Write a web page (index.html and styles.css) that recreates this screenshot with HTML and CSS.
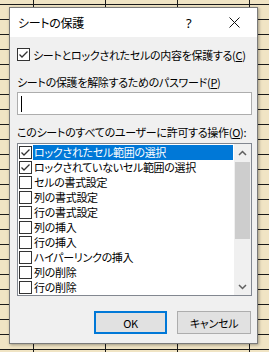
FILE: index.html
```html
<!DOCTYPE html>
<html lang="ja">
<head>
    <meta charset="UTF-8">
    <title>シートの保護</title>
    <link rel="stylesheet" href="styles.css">
</head>
<body>
    <div class="dialog">
        <div class="titlebar">
            <span class="title">シートの保護</span>
            <span class="help">?</span>
            <span class="close">
                <svg width="11" height="11" viewBox="0 0 11 11"><path d="M0.5 0.5L10.5 10.5M10.5 0.5L0.5 10.5" stroke="#111" stroke-width="1" fill="none"/></svg>
            </span>
        </div>

        <div class="content">
            <div class="check-row">
                <span class="box"><svg width="11" height="11" viewBox="0 0 11 11"><path d="M1.5 5.5L4 8L9.5 2.5" stroke="#333" stroke-width="1.3" fill="none"/></svg></span>
                <span>シートとロックされたセルの内容を保護する(<u>C</u>)</span>
            </div>

            <div class="label pw-label">シートの保護を解除するためのパスワード(<u>P</u>)</div>
            <div class="input"><span class="caret"></span></div>

            <div class="label ops-label">このシートのすべてのユーザーに許可する操作(<u>O</u>):</div>
            <div class="list">
                <ul class="items">
                    <li class="selected">
                        <span class="box"><svg width="11" height="11" viewBox="0 0 11 11"><path d="M1.5 5.5L4 8L9.5 2.5" stroke="#333" stroke-width="1.3" fill="none"/></svg></span>
                        <span class="text">ロックされたセル範囲の選択</span>
                    </li>
                    <li>
                        <span class="box"><svg width="11" height="11" viewBox="0 0 11 11"><path d="M1.5 5.5L4 8L9.5 2.5" stroke="#333" stroke-width="1.3" fill="none"/></svg></span>
                        <span class="text">ロックされていないセル範囲の選択</span>
                    </li>
                    <li><span class="box"></span><span class="text">セルの書式設定</span></li>
                    <li><span class="box"></span><span class="text">列の書式設定</span></li>
                    <li><span class="box"></span><span class="text">行の書式設定</span></li>
                    <li><span class="box"></span><span class="text">列の挿入</span></li>
                    <li><span class="box"></span><span class="text">行の挿入</span></li>
                    <li><span class="box"></span><span class="text">ハイパーリンクの挿入</span></li>
                    <li><span class="box"></span><span class="text">列の削除</span></li>
                    <li><span class="box"></span><span class="text">行の削除</span></li>
                </ul>
                <div class="scrollbar">
                    <div class="arrow">
                        <svg width="9" height="6" viewBox="0 0 9 6"><path d="M1 5L4.5 1.5L8 5" stroke="#606060" stroke-width="1.5" fill="none"/></svg>
                    </div>
                    <div class="track"><div class="thumb"></div></div>
                    <div class="arrow">
                        <svg width="9" height="6" viewBox="0 0 9 6"><path d="M1 1L4.5 4.5L8 1" stroke="#606060" stroke-width="1.5" fill="none"/></svg>
                    </div>
                </div>
            </div>

            <div class="buttons">
                <button class="btn default">OK</button>
                <button class="btn">キャンセル</button>
            </div>
        </div>
    </div>
</body>
</html>
```

FILE: styles.css
```css
:root {
    --grid-bg: #f0e4c4;
    --grid-line: #1a1a1a;
    --face: #f0f0f0;
    --select: #0078d7;
}

* {
    margin: 0;
    padding: 0;
    box-sizing: border-box;
}

body {
    width: 269px;
    height: 352px;
    overflow: hidden;
    font-family: "Noto Sans CJK JP", "Noto Sans", sans-serif;
    font-size: 11px;
    letter-spacing: -0.3px;
    font-feature-settings: "palt";
    color: #000;
    background-color: var(--grid-bg);
    background-image:
        linear-gradient(to right, var(--grid-line) 1px, transparent 1px),
        linear-gradient(to bottom, var(--grid-line) 1px, transparent 1px);
    background-size: 72px 100%, 100% 15px;
    background-position: 33px 0, 0 4px;
    padding: 7px 0 0 9px;
}

.dialog {
    width: 249px;
    height: 337px;
    border: 1px solid #7a7a7a;
    background: var(--face);
    box-shadow: 1px 1px 3px rgba(0, 0, 0, 0.35);
}

.titlebar {
    height: 29px;
    background: white;
    display: flex;
    align-items: center;
    padding-left: 8px;
}

.title {
    flex: 1;
    font-size: 12px;
}

.help {
    font-family: "Noto Sans", sans-serif;
    font-size: 13px;
    width: 8px;
    margin-right: 35px;
}

.close {
    display: flex;
    margin-right: 17px;
}

.content {
    padding: 11px 5px 0 7px;
}

.check-row {
    display: flex;
    align-items: center;
    height: 13px;
    gap: 3px;
    white-space: nowrap;
}

.box {
    width: 13px;
    height: 13px;
    border: 1px solid #333;
    background: white;
    display: flex;
    align-items: center;
    justify-content: center;
    flex-shrink: 0;
}

.label {
    line-height: 16px;
    white-space: nowrap;
}

.pw-label {
    margin-top: 13px;
}

.input {
    margin-top: 2px;
    height: 23px;
    border: 1px solid #adadad;
    background: white;
    padding: 3px 3px;
}

.caret {
    display: block;
    width: 1px;
    height: 16px;
    background: #000;
}

.ops-label {
    margin-top: 9px;
}

.list {
    margin-top: 3px;
    height: 153px;
    border: 1px solid #828790;
    background: white;
    display: flex;
}

.items {
    list-style: none;
    flex: 1;
    padding: 1px 1px 0 1px;
}

.items li {
    height: 15px;
    display: flex;
    align-items: center;
    white-space: nowrap;
}

.items .text {
    flex: 1;
    margin-left: 1px;
    padding-left: 1px;
    line-height: 15px;
}

.items li.selected .text {
    background: var(--select);
    color: white;
}

.scrollbar {
    width: 17px;
    background: var(--face);
    display: flex;
    flex-direction: column;
}

.arrow {
    height: 17px;
    display: flex;
    align-items: center;
    justify-content: center;
}

.track {
    flex: 1;
}

.thumb {
    margin: 1px 1px 0 1px;
    height: 77px;
    background: #cdcdcd;
}

.buttons {
    margin-top: 15px;
    display: flex;
    justify-content: flex-end;
    gap: 10px;
    padding-right: 1px;
}

.btn {
    height: 23px;
    width: 74px;
    font-family: inherit;
    font-size: 11px;
    letter-spacing: -0.3px;
    font-feature-settings: "palt";
    background: #e1e1e1;
    border: 1px solid #adadad;
    color: #000;
}

.btn.default {
    width: 73px;
    border: 2px solid var(--select);
}
```
